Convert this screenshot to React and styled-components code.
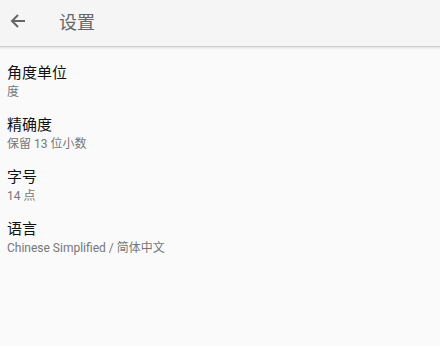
import React from "react";
import styled, { createGlobalStyle } from "styled-components";

const GlobalStyle = createGlobalStyle`
	html, body {
		margin: 0;
		padding: 0;
		background: #fafafa;
		font-family: Roboto, "Noto Sans CJK SC", sans-serif;
	}
`;

const Page = styled.div`
	width: 440px;
	height: 346px;
	background: #fafafa;
	overflow: hidden;
`;

const Header = styled.header`
	height: 47px;
	padding-bottom: 5px;
	background: #f5f5f5;
	border-bottom: 1px solid #cfcfcf;
	box-shadow: 0 1px 2px rgba(0, 0, 0, 0.12);
	display: flex;
	align-items: center;
	box-sizing: border-box;
`;

const BackButton = styled.button`
	width: 36px;
	height: 36px;
	padding: 0;
	border: none;
	background: none;
	display: flex;
	align-items: center;
	justify-content: center;
	cursor: pointer;
`;

const Title = styled.h1`
	margin: 0 0 0 23px;
	font-size: 18px;
	font-weight: 400;
	color: #666;
`;

const List = styled.div`
	padding-top: 8px;
`;

const Item = styled.div`
	padding: 7px 7px;
	display: flex;
	flex-direction: column;
`;

const ItemTitle = styled.div`
	font-size: 15px;
	line-height: 22px;
	color: #111;
`;

const ItemValue = styled.div`
	font-size: 12px;
	line-height: 16px;
	color: #777;
`;

const settings = [
	{ title: "角度单位", value: "度" },
	{ title: "精确度", value: "保留 13 位小数" },
	{ title: "字号", value: "14 点" },
	{ title: "语言", value: "Chinese Simplified / 简体中文" },
];

const App = () => {
	return (
		<Page>
			<GlobalStyle />
			<Header>
				<BackButton aria-label="返回">
					<svg width="16" height="16" viewBox="0 0 16 16">
						<path
							d="M15 8H2.5M8 2L2 8l6 6"
							fill="none"
							stroke="#666"
							strokeWidth="2"
						/>
					</svg>
				</BackButton>
				<Title>设置</Title>
			</Header>
			<List>
				{settings.map((s) => (
					<Item key={s.title}>
						<ItemTitle>{s.title}</ItemTitle>
						<ItemValue>{s.value}</ItemValue>
					</Item>
				))}
			</List>
		</Page>
	);
};

export default App;
